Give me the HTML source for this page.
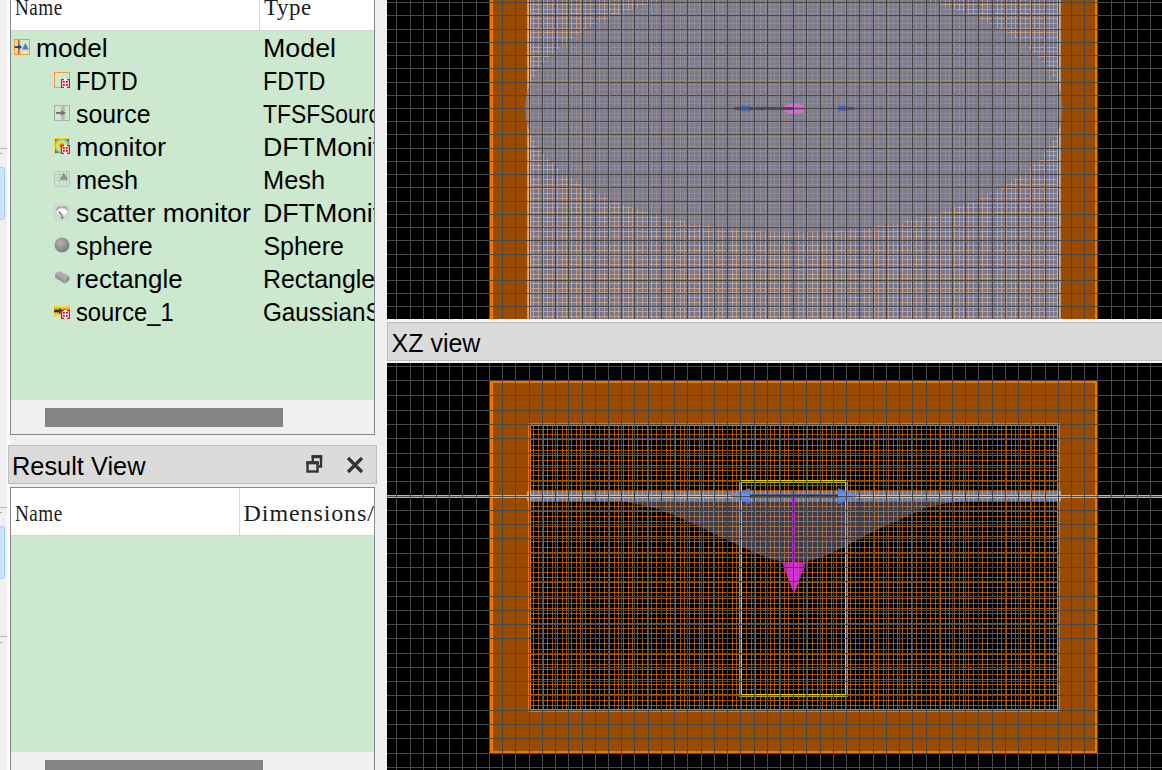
<!DOCTYPE html>
<html><head><meta charset="utf-8"><title>FDTD layout</title>
<style>
html,body{margin:0;padding:0}
body{width:1162px;height:770px;overflow:hidden;background:#f0f0f0;position:relative;font-family:"Liberation Sans",sans-serif;color:#000}
.abs{position:absolute}
.vp{position:absolute;left:387px;top:0}
.t{position:absolute;font-size:25px;line-height:29px;white-space:nowrap;transform-origin:0 50%}
.ic{position:absolute}
.mono{position:absolute;transform-origin:0 50%;color:#1c1c1c;font-family:"Liberation Serif","Noto Serif CJK SC",serif;font-size:24px;line-height:24px;white-space:nowrap;height:24px}
.mc{display:inline-block;width:12px;height:24px;vertical-align:top}
.mi{display:inline-block;transform-origin:50% 50%;text-align:center}
.frame{position:absolute;border:1px solid #828790;border-top:none;box-sizing:border-box;overflow:hidden}
/*bar*/.bar{position:absolute;background:#dbdbdb;border:1px solid #bebebe;box-sizing:border-box}
.bt{position:absolute;font-size:25px;line-height:29px;white-space:nowrap;transform-origin:0 50%}
.blue{position:absolute;left:-2px;width:7px;background:#cce4ff;border:1px solid #99ccff;border-radius:3px;box-sizing:border-box}
.hl{position:absolute;left:0;width:7px;height:1px;background:#b4b4b4}
.mk{position:absolute;left:0;width:2px;height:1px;background:#a0a0a0}
</style></head><body>
<!-- left strip -->
<div class="abs" style="left:7px;top:0;width:3px;height:770px;background:#fdfdfd"></div>
<div class="hl" style="top:148px"></div><div class="mk" style="top:153px"></div>
<div class="blue" style="top:167px;height:53px"></div>
<div class="hl" style="top:507px"></div><div class="mk" style="top:512px"></div>
<div class="blue" style="top:526px;height:53px"></div>
<div class="hl" style="top:636px"></div><div class="mk" style="top:642px"></div>

<!-- object tree -->
<div class="frame" style="left:10px;top:0;width:365px;height:435px;background:#cce8cf">
 <div class="abs" style="left:0;top:0;width:363px;height:30px;background:#fff;border-bottom:1px solid #d4d4d4"></div>
 <div class="abs" style="left:248px;top:0;width:1px;height:30px;background:#d8d8d8"></div>
 <div class="abs" style="left:0;top:400px;width:363px;height:34px;background:#f0f0f0"></div>
 <div class="abs" style="left:34px;top:408px;width:238px;height:19px;background:#858585"></div>
</div>
<div class="abs" id="treeclip" style="left:11px;top:0;width:363px;height:400px;overflow:hidden"><div class="abs" style="left:-11px;top:0;width:400px;height:400px">
<span class="mono" style="left:14.6px;top:-5.0px;transform:scaleX(0.8);letter-spacing:0.6px">Name</span>
<span class="mono" style="left:264px;top:-5.0px;transform:scaleX(0.955);letter-spacing:0.6px">Type</span>
<svg class="ic" style="left:14px;top:39px" width="16" height="16" viewBox="0 0 16 16"><rect x="2.6" y="1" width="1.6" height="14" fill="#f8d468"/><rect x="4" y="0" width="1.5" height="16" fill="#f04420"/><rect x="5.4" y="1" width="0.9" height="14" fill="#f8902c"/><rect x="0.5" y="0.5" width="15" height="15" fill="none" stroke="#f09a3c"/><rect x="0.6" y="7.1" width="6" height="1.9" fill="#04508c"/><path d="M4.6 5.7L8 8 4.6 10.4Z" fill="#04508c"/><path d="M11.4 4L14.8 10.6H8Z" fill="#5478c4"/></svg>
<span class="t nm" id="n0" style="left:36.3px;top:34.2px;transform:scaleX(1.053)">model</span>
<span class="t ty" id="t0" style="left:263.4px;top:34.2px;transform:scaleX(1.072)">Model</span>
<svg class="ic" style="left:54px;top:72px" width="16" height="16" viewBox="0 0 16 16"><rect x="0.5" y="0.5" width="15" height="15" fill="none" stroke="#f89838"/><rect x="7" y="7" width="9" height="9" fill="#fff"/><path d="M10 7.6H7.6V15.4H10M13 7.6H15.4V15.4H13" fill="none" stroke="#e8101c" stroke-width="1.3"/><rect x="9" y="9" width="1.8" height="1.8" fill="#e60012"/><rect x="12" y="9" width="1.8" height="1.8" fill="#e60012"/><rect x="9" y="12" width="1.8" height="1.8" fill="#e60012"/><rect x="12" y="12" width="1.8" height="1.8" fill="#e60012"/></svg>
<span class="t nm" id="n1" style="left:76.3px;top:67.2px;transform:scaleX(0.925)">FDTD</span>
<span class="t ty" id="t1" style="left:263.4px;top:67.2px;transform:scaleX(0.934)">FDTD</span>
<svg class="ic" style="left:54px;top:105px" width="16" height="16" viewBox="0 0 16 16"><defs><linearGradient id="sg" x1="0" x2="1" y1="0" y2="0"><stop offset="0" stop-color="#dcdcdc"/><stop offset="0.5" stop-color="#b0b0b0"/><stop offset="1" stop-color="#dcdcdc"/></linearGradient></defs><rect x="6" y="1" width="6" height="14" fill="url(#sg)"/><path d="M0.5 0.5H15.5V15.5H0.5" fill="none" stroke="#7c847c" stroke-dasharray="1 1"/><path d="M0.5 0.5V15.5" stroke="#9cac9c" fill="none"/><rect x="2" y="7" width="7" height="2" fill="#747474"/><path d="M7 5.2L12 8 7 10.8Z" fill="#747474"/></svg>
<span class="t nm" id="n2" style="left:76.3px;top:100.2px;transform:scaleX(0.994)">source</span>
<span class="t ty" id="t2" style="left:263.4px;top:100.2px;transform:scaleX(0.914)">TFSFSource</span>
<svg class="ic" style="left:54px;top:138px" width="16" height="16" viewBox="0 0 16 16"><defs><radialGradient id="mg" cx="0.48" cy="0.48" r="0.62"><stop offset="0" stop-color="#f04c10"/><stop offset="0.18" stop-color="#f47818"/><stop offset="0.32" stop-color="#d8e858"/><stop offset="0.58" stop-color="#c0e468"/><stop offset="0.75" stop-color="#78a8d8"/><stop offset="1" stop-color="#4058a8"/></radialGradient></defs><rect x="0.5" y="0.5" width="15" height="15" fill="url(#mg)" stroke="#ffd820"/><rect x="7" y="7" width="9" height="9" fill="#fff"/><path d="M10 7.6H7.6V15.4H10M13 7.6H15.4V15.4H13" fill="none" stroke="#e8101c" stroke-width="1.3"/><rect x="9" y="9" width="1.8" height="1.8" fill="#e60012"/><rect x="12" y="9" width="1.8" height="1.8" fill="#e60012"/><rect x="9" y="12" width="1.8" height="1.8" fill="#e60012"/><rect x="12" y="12" width="1.8" height="1.8" fill="#e60012"/></svg>
<span class="t nm" id="n3" style="left:76.3px;top:133.2px;transform:scaleX(1.078)">monitor</span>
<span class="t ty" id="t3" style="left:263.4px;top:133.2px;transform:scaleX(1.068)">DFTMonitor</span>
<svg class="ic" style="left:54px;top:171px" width="16" height="16" viewBox="0 0 16 16"><path d="M0.5 0.5H15.5V15.5H0.5ZM5.5 0.5V15.5M12.5 0.5V15.5M0.5 3.5H15.5M0.5 6.5H15.5M0.5 9.5H15.5" fill="none" stroke="#bcc8c0"/><path d="M9.5 9.5V15.5" stroke="#c8d4cc" fill="none"/><path d="M9.6 1.4L14.2 8.8H5.8Z" fill="#8e8e8e"/></svg>
<span class="t nm" id="n4" style="left:76.3px;top:166.2px;transform:scaleX(1.014)">mesh</span>
<span class="t ty" id="t4" style="left:263.4px;top:166.2px;transform:scaleX(1.016)">Mesh</span>
<svg class="ic" style="left:54px;top:204px" width="16" height="16" viewBox="0 0 16 16"><rect x="0" y="0" width="16" height="16" rx="1.5" fill="#d4d6d4"/><path d="M3 6.5A3 3 0 0 1 7.5 3.5M8.5 3.5A3 3 0 0 1 13 6.5" stroke="#a4a4a4" stroke-width="1.8" fill="none"/><ellipse cx="8" cy="7.8" rx="5.2" ry="3" fill="#fdfdfd"/><path d="M4.6 7.4L8.4 11.4" stroke="#767676" stroke-width="1.5"/><circle cx="8.2" cy="13.6" r="1.3" fill="#7c7c7c"/></svg>
<span class="t nm" id="n5" style="left:76.3px;top:199.2px;transform:scaleX(1.057)">scatter monitor</span>
<span class="t ty" id="t5" style="left:263.4px;top:199.2px;transform:scaleX(1.068)">DFTMonitor</span>
<svg class="ic" style="left:54px;top:237px" width="16" height="16" viewBox="0 0 16 16"><defs><radialGradient id="rg" cx="0.4" cy="0.35" r="0.7"><stop offset="0" stop-color="#b4b4b4"/><stop offset="1" stop-color="#787878"/></radialGradient></defs><circle cx="8" cy="8" r="7.5" fill="url(#rg)"/></svg>
<span class="t nm" id="n6" style="left:76.3px;top:232.2px;transform:scaleX(1.002)">sphere</span>
<span class="t ty" id="t6" style="left:263.4px;top:232.2px;transform:scaleX(1.000)">Sphere</span>
<svg class="ic" style="left:54px;top:270px" width="16" height="16" viewBox="0 0 16 16"><path d="M1.1 3.4L5.1 0.9 15.4 6 10.9 9.4Z" fill="#acacac"/><path d="M1.1 3.4L10.9 9.4V13.7L1.1 7.7Z" fill="#989898"/><path d="M10.9 9.4L15.4 6V10L10.9 13.7Z" fill="#8c8c8c"/><path d="M10.9 9.4V13.7" stroke="#b4b4b4" stroke-width="0.6"/></svg>
<span class="t nm" id="n7" style="left:76.3px;top:265.2px;transform:scaleX(1.036)">rectangle</span>
<span class="t ty" id="t7" style="left:263.4px;top:265.2px;transform:scaleX(0.997)">Rectangle</span>
<svg class="ic" style="left:54px;top:303px" width="16" height="16" viewBox="0 0 16 16"><defs><linearGradient id="s1" x1="0" x2="0" y1="0" y2="1"><stop offset="0" stop-color="#ffd800"/><stop offset="0.2" stop-color="#ffd800"/><stop offset="0.36" stop-color="#e8843c"/><stop offset="0.5" stop-color="#d8682c"/><stop offset="0.64" stop-color="#e8843c"/><stop offset="0.8" stop-color="#ffd800"/><stop offset="1" stop-color="#f0c000"/></linearGradient></defs><path d="M0 2Q8 5 16 2V13.7Q8 10 0 13.7Z" fill="url(#s1)"/><rect x="0.3" y="6.9" width="7" height="2.2" fill="#203050"/><path d="M5 5L9.5 8 5 11Z" fill="#244860"/><rect x="7" y="7" width="9" height="9" fill="#fff"/><path d="M10 7.6H7.6V15.4H10M13 7.6H15.4V15.4H13" fill="none" stroke="#e8101c" stroke-width="1.3"/><rect x="9" y="9" width="1.8" height="1.8" fill="#e60012"/><rect x="12" y="9" width="1.8" height="1.8" fill="#e60012"/><rect x="9" y="12" width="1.8" height="1.8" fill="#e60012"/><rect x="12" y="12" width="1.8" height="1.8" fill="#e60012"/></svg>
<span class="t nm" id="n8" style="left:76.3px;top:298.2px;transform:scaleX(0.949)">source_1</span>
<span class="t ty" id="t8" style="left:263.4px;top:298.2px;transform:scaleX(0.970)">GaussianSource</span>
</div></div>

<!-- result view -->
<div class="bar" style="left:8px;top:445px;width:369px;height:39px"></div>
<span class="bt" id="rv" style="left:12.2px;top:452px;transform:scaleX(1.015)">Result View</span>
<svg class="abs" style="left:305px;top:454px" width="60" height="22" viewBox="305 454 60 22"><path d="M312.8 462V456.5H321V466.5H318.5" fill="none" stroke="#333" stroke-width="2.4" stroke-linejoin="miter"/><rect x="311.6" y="455.2" width="10.6" height="3" fill="#333"/><rect x="307.5" y="462.5" width="10" height="9" fill="none" stroke="#333" stroke-width="2.4"/><rect x="306.3" y="461.3" width="12.4" height="3" fill="#333"/><path d="M348 458L362 472M362 458L348 472" stroke="#333" stroke-width="3.2" fill="none"/></svg>
<div class="frame" style="left:10px;top:487px;width:365px;height:300px;background:#cce8cf;border-top:1px solid #828790">
 <div class="abs" style="left:0;top:0;width:363px;height:47px;background:#fff;border-bottom:1px solid #d4d4d4"></div>
 <div class="abs" style="left:228px;top:0;width:1px;height:47px;background:#d8d8d8"></div>
 <div class="abs" style="left:0;top:264px;width:363px;height:40px;background:#f0f0f0"></div>
 <div class="abs" style="left:34px;top:272px;width:218px;height:19px;background:#858585"></div>
</div>
<div class="abs" style="left:11px;top:488px;width:363px;height:47px;overflow:hidden"><div class="abs" style="left:-11px;top:-488px;width:400px;height:600px">
<span class="mono" style="left:14.6px;top:500.5px;transform:scaleX(0.8);letter-spacing:0.6px">Name</span>
<span class="mono" style="left:243.6px;top:500.5px;transform:scaleX(1.0);letter-spacing:0.9px">Dimensions/</span>
</div></div>

<!-- XZ title bar -->
<div class="abs" style="left:387px;top:319px;width:775px;height:44px;background:#f4f4f4"></div>
<div class="bar" style="left:387px;top:322px;width:790px;height:39px"></div>
<span class="bt" id="xz" style="left:391.5px;top:329.2px">XZ view</span>

<svg class="vp" width="775" height="770" viewBox="387 0 775 770" shape-rendering="crispEdges">
<defs><clipPath id="ct"><rect x="387" y="0" width="775" height="319"/></clipPath><clipPath id="cb"><rect x="387" y="363" width="775" height="407"/></clipPath><linearGradient id="gb" x1="0" y1="0" x2="0" y2="1"><stop offset="0" stop-color="#3f6fe0"/><stop offset="0.5" stop-color="#6c98f4"/><stop offset="1" stop-color="#3f6fe0"/></linearGradient><linearGradient id="gm" x1="0" y1="0" x2="1" y2="0"><stop offset="0" stop-color="#bc1cc4"/><stop offset="0.5" stop-color="#e840f0"/><stop offset="1" stop-color="#bc1cc4"/></linearGradient></defs>
<g clip-path="url(#ct)">
<rect x="387" y="0" width="775" height="319" fill="#000"/>
<rect x="489" y="-5" width="609" height="330" fill="#9a4b00"/>
<rect x="489" y="-5" width="4" height="330" fill="#e87800"/><rect x="1095" y="-5" width="3" height="330" fill="#e87800"/>
<rect x="529" y="-5" width="530" height="330" fill="#000"/>
<path d="M533.5 0V319M538.5 0V319M543.5 0V319M547.5 0V319M552.5 0V319M557.5 0V319M562.5 0V319M566.5 0V319M571.5 0V319M576.5 0V319M580.5 0V319M585.5 0V319M590.5 0V319M595.5 0V319M599.5 0V319M604.5 0V319M609.5 0V319M614.5 0V319M618.5 0V319M623.5 0V319M628.5 0V319M632.5 0V319M637.5 0V319M642.5 0V319M647.5 0V319M651.5 0V319M656.5 0V319M661.5 0V319M666.5 0V319M670.5 0V319M675.5 0V319M680.5 0V319M684.5 0V319M689.5 0V319M694.5 0V319M699.5 0V319M703.5 0V319M708.5 0V319M713.5 0V319M718.5 0V319M722.5 0V319M727.5 0V319M732.5 0V319M736.5 0V319M741.5 0V319M746.5 0V319M751.5 0V319M755.5 0V319M760.5 0V319M765.5 0V319M770.5 0V319M774.5 0V319M779.5 0V319M784.5 0V319M788.5 0V319M793.5 0V319M798.5 0V319M803.5 0V319M807.5 0V319M812.5 0V319M817.5 0V319M822.5 0V319M826.5 0V319M831.5 0V319M836.5 0V319M841.5 0V319M845.5 0V319M850.5 0V319M855.5 0V319M859.5 0V319M864.5 0V319M869.5 0V319M874.5 0V319M878.5 0V319M883.5 0V319M888.5 0V319M893.5 0V319M897.5 0V319M902.5 0V319M907.5 0V319M911.5 0V319M916.5 0V319M921.5 0V319M926.5 0V319M930.5 0V319M935.5 0V319M940.5 0V319M945.5 0V319M949.5 0V319M954.5 0V319M959.5 0V319M963.5 0V319M968.5 0V319M973.5 0V319M978.5 0V319M982.5 0V319M987.5 0V319M992.5 0V319M997.5 0V319M1001.5 0V319M1006.5 0V319M1011.5 0V319M1015.5 0V319M1020.5 0V319M1025.5 0V319M1030.5 0V319M1034.5 0V319M1039.5 0V319M1044.5 0V319M1049.5 0V319M1053.5 0V319" stroke="#e87800" stroke-opacity="0.69" stroke-width="1" fill="none"/>
<path d="M529 4.5H1059M529 9.5H1059M529 13.5H1059M529 18.5H1059M529 23.5H1059M529 28.5H1059M529 32.5H1059M529 37.5H1059M529 42.5H1059M529 47.5H1059M529 51.5H1059M529 56.5H1059M529 61.5H1059M529 65.5H1059M529 70.5H1059M529 75.5H1059M529 80.5H1059M529 84.5H1059M529 89.5H1059M529 94.5H1059M529 99.5H1059M529 103.5H1059M529 108.5H1059M529 113.5H1059M529 117.5H1059M529 122.5H1059M529 127.5H1059M529 132.5H1059M529 136.5H1059M529 141.5H1059M529 146.5H1059M529 151.5H1059M529 155.5H1059M529 160.5H1059M529 165.5H1059M529 169.5H1059M529 174.5H1059M529 179.5H1059M529 184.5H1059M529 188.5H1059M529 193.5H1059M529 198.5H1059M529 203.5H1059M529 207.5H1059M529 212.5H1059M529 217.5H1059M529 221.5H1059M529 226.5H1059M529 231.5H1059M529 236.5H1059M529 240.5H1059M529 245.5H1059M529 250.5H1059M529 255.5H1059M529 259.5H1059M529 264.5H1059M529 269.5H1059M529 274.5H1059M529 278.5H1059M529 283.5H1059M529 288.5H1059M529 292.5H1059M529 297.5H1059M529 302.5H1059M529 307.5H1059M529 311.5H1059M529 316.5H1059" stroke="#e87800" stroke-opacity="0.69" stroke-width="1" fill="none"/>
<path d="M528.5 0V319M530.5 0V319M1057.5 0V319M1059.5 0V319" stroke="#e87800" stroke-width="1" fill="none"/>
<rect x="527" y="-5" width="534" height="330" fill="rgb(213,218,255)" fill-opacity="0.55"/>
<ellipse cx="793.7" cy="108.5" rx="269" ry="124" fill="rgb(125,126,143)" fill-opacity="0.64" shape-rendering="auto"/>
<ellipse cx="794.5" cy="108.5" rx="11.5" ry="5.5" fill="#cc70cc"/>
<rect x="734" y="107" width="60" height="3" fill="#2f4fa0"/>
<rect x="794" y="107" width="44" height="3" fill="#5a86d8"/>
<rect x="838" y="107" width="16" height="3" fill="#3a5aa8"/>
<path d="M741 108.5L750 105V112Z" fill="#4466b8"/><rect x="741" y="106" width="9" height="5" fill="#4466b8"/>
<path d="M847 108.5L838 105V112Z" fill="#4466b8"/><rect x="838" y="106" width="8" height="5" fill="#4466b8"/>
<path d="M396.5 0V319M410.5 0V319M423.5 0V319M436.5 0V319M449.5 0V319M462.5 0V319M476.5 0V319M489.5 0V319M502.5 0V319M515.5 0V319M529.5 0V319M542.5 0V319M555.5 0V319M568.5 0V319M582.5 0V319M595.5 0V319M608.5 0V319M621.5 0V319M634.5 0V319M648.5 0V319M661.5 0V319M674.5 0V319M687.5 0V319M701.5 0V319M714.5 0V319M727.5 0V319M740.5 0V319M754.5 0V319M767.5 0V319M780.5 0V319M793.5 0V319M806.5 0V319M820.5 0V319M833.5 0V319M846.5 0V319M859.5 0V319M873.5 0V319M886.5 0V319M899.5 0V319M912.5 0V319M926.5 0V319M939.5 0V319M952.5 0V319M965.5 0V319M978.5 0V319M992.5 0V319M1005.5 0V319M1018.5 0V319M1031.5 0V319M1045.5 0V319M1058.5 0V319M1071.5 0V319M1084.5 0V319M1097.5 0V319M1111.5 0V319M1124.5 0V319M1137.5 0V319M1150.5 0V319M387 2.5H1162M387 15.5H1162M387 29.5H1162M387 42.5H1162M387 55.5H1162M387 68.5H1162M387 82.5H1162M387 95.5H1162M387 108.5H1162M387 121.5H1162M387 134.5H1162M387 148.5H1162M387 161.5H1162M387 174.5H1162M387 187.5H1162M387 201.5H1162M387 214.5H1162M387 227.5H1162M387 240.5H1162M387 254.5H1162M387 267.5H1162M387 280.5H1162M387 293.5H1162M387 306.5H1162" stroke="#484848" stroke-width="1" fill="none"/>
</g>
<g clip-path="url(#cb)">
<rect x="387" y="363" width="775" height="407" fill="#000"/>
<rect x="489" y="380" width="609" height="374" fill="#e87800"/>
<rect x="493" y="383" width="602" height="368" fill="#9a4b00"/>
<rect x="528" y="423" width="532" height="289" fill="#e87800"/>
<rect x="529" y="424" width="530" height="287" fill="#000"/>
<path d="M533.5 424V711M538.5 424V711M543.5 424V711M547.5 424V711M552.5 424V711M557.5 424V711M562.5 424V711M566.5 424V711M571.5 424V711M576.5 424V711M580.5 424V711M585.5 424V711M590.5 424V711M595.5 424V711M599.5 424V711M604.5 424V711M609.5 424V711M614.5 424V711M618.5 424V711M623.5 424V711M628.5 424V711M632.5 424V711M637.5 424V711M642.5 424V711M647.5 424V711M651.5 424V711M656.5 424V711M661.5 424V711M666.5 424V711M670.5 424V711M675.5 424V711M680.5 424V711M684.5 424V711M689.5 424V711M694.5 424V711M699.5 424V711M703.5 424V711M708.5 424V711M713.5 424V711M718.5 424V711M722.5 424V711M727.5 424V711M732.5 424V711M736.5 424V711M741.5 424V711M746.5 424V711M751.5 424V711M755.5 424V711M760.5 424V711M765.5 424V711M770.5 424V711M774.5 424V711M779.5 424V711M784.5 424V711M788.5 424V711M793.5 424V711M798.5 424V711M803.5 424V711M807.5 424V711M812.5 424V711M817.5 424V711M822.5 424V711M826.5 424V711M831.5 424V711M836.5 424V711M841.5 424V711M845.5 424V711M850.5 424V711M855.5 424V711M859.5 424V711M864.5 424V711M869.5 424V711M874.5 424V711M878.5 424V711M883.5 424V711M888.5 424V711M893.5 424V711M897.5 424V711M902.5 424V711M907.5 424V711M911.5 424V711M916.5 424V711M921.5 424V711M926.5 424V711M930.5 424V711M935.5 424V711M940.5 424V711M945.5 424V711M949.5 424V711M954.5 424V711M959.5 424V711M963.5 424V711M968.5 424V711M973.5 424V711M978.5 424V711M982.5 424V711M987.5 424V711M992.5 424V711M997.5 424V711M1001.5 424V711M1006.5 424V711M1011.5 424V711M1015.5 424V711M1020.5 424V711M1025.5 424V711M1030.5 424V711M1034.5 424V711M1039.5 424V711M1044.5 424V711M1049.5 424V711M1053.5 424V711" stroke="#e87800" stroke-opacity="0.69" stroke-width="1" fill="none"/>
<path d="M529 429.5H1059M529 434.5H1059M529 439.5H1059M529 445.5H1059M529 450.5H1059M529 455.5H1059M529 460.5H1059M529 465.5H1059M529 470.5H1059M529 475.5H1059M529 480.5H1059M529 485.5H1059M529 490.5H1059M529 496.5H1059M529 501.5H1059M529 506.5H1059M529 511.5H1059M529 516.5H1059M529 521.5H1059M529 526.5H1059M529 531.5H1059M529 536.5H1059M529 541.5H1059M529 547.5H1059M529 552.5H1059M529 557.5H1059M529 562.5H1059M529 567.5H1059M529 572.5H1059M529 577.5H1059M529 582.5H1059M529 587.5H1059M529 592.5H1059M529 598.5H1059M529 603.5H1059M529 608.5H1059M529 613.5H1059M529 618.5H1059M529 623.5H1059M529 628.5H1059M529 633.5H1059M529 638.5H1059M529 643.5H1059M529 649.5H1059M529 654.5H1059M529 659.5H1059M529 664.5H1059M529 669.5H1059M529 674.5H1059M529 679.5H1059M529 684.5H1059M529 689.5H1059M529 694.5H1059M529 700.5H1059M529 705.5H1059" stroke="#e87800" stroke-opacity="0.69" stroke-width="1" fill="none"/>
<path d="M530.5 424V711M1057.5 424V711M529 425.5H1059M529 709.5H1059" stroke="#e87800" stroke-width="1" fill="none"/>
<rect x="739" y="480" width="109" height="1" fill="#f0d000"/><rect x="741" y="482" width="105" height="1" fill="#a8a800"/>
<rect x="739" y="480" width="1" height="217" fill="#a8a800"/><rect x="741" y="482" width="1" height="213" fill="#f0d000"/>
<rect x="845" y="482" width="1" height="213" fill="#f0d000"/><rect x="847" y="480" width="1" height="217" fill="#a8a800"/>
<rect x="741" y="694" width="105" height="1" fill="#f0d000"/><rect x="739" y="696" width="109" height="1" fill="#a8a800"/>
<rect x="387" y="495" width="775" height="3" fill="#b4b4d8"/>
<rect x="527" y="491" width="534" height="10" fill="rgb(213,218,255)" fill-opacity="0.55"/>
<rect x="527" y="495" width="534" height="3" fill="#c4c4e4"/>
<polygon points="622.0,501 640.0,505 660.0,509.5 680.0,518 700.0,527 720.0,536.5 740.0,546 760.0,555 772.0,559.5 782.0,561.5 805.4,561.5 815.4,559.5 827.4,555 847.4,545.13 867.4,534.63 887.4,525 907.4,516 927.4,507.5 947.4,503 970.4,501" fill="rgb(145,150,190)" fill-opacity="0.40" shape-rendering="auto"/>
<rect x="792" y="498" width="3" height="66" fill="#a832be"/>
<rect x="748" y="494.6" width="92" height="1.4" fill="#0030b8" shape-rendering="auto"/><rect x="748" y="496" width="92" height="2" fill="#3c5abe"/>
<path d="M729 496L750 488V504Z" fill="url(#gb)" shape-rendering="auto"/>
<path d="M858.5 496L838 488V504Z" fill="url(#gb)" shape-rendering="auto"/>
<path d="M782 562.5H806L794 594Z" fill="url(#gm)" fill-opacity="0.9" shape-rendering="auto"/>
<path d="M396.5 363V770M410.5 363V770M423.5 363V770M436.5 363V770M449.5 363V770M462.5 363V770M476.5 363V770M489.5 363V770M502.5 363V770M515.5 363V770M529.5 363V770M542.5 363V770M555.5 363V770M568.5 363V770M582.5 363V770M595.5 363V770M608.5 363V770M621.5 363V770M634.5 363V770M648.5 363V770M661.5 363V770M674.5 363V770M687.5 363V770M701.5 363V770M714.5 363V770M727.5 363V770M740.5 363V770M754.5 363V770M767.5 363V770M780.5 363V770M793.5 363V770M806.5 363V770M820.5 363V770M833.5 363V770M846.5 363V770M859.5 363V770M873.5 363V770M886.5 363V770M899.5 363V770M912.5 363V770M926.5 363V770M939.5 363V770M952.5 363V770M965.5 363V770M978.5 363V770M992.5 363V770M1005.5 363V770M1018.5 363V770M1031.5 363V770M1045.5 363V770M1058.5 363V770M1071.5 363V770M1084.5 363V770M1097.5 363V770M1111.5 363V770M1124.5 363V770M1137.5 363V770M1150.5 363V770M387 366.5H1162M387 380.5H1162M387 395.5H1162M387 410.5H1162M387 424.5H1162M387 438.5H1162M387 453.5H1162M387 467.5H1162M387 481.5H1162M387 496.5H1162M387 510.5H1162M387 524.5H1162M387 538.5H1162M387 553.5H1162M387 567.5H1162M387 581.5H1162M387 596.5H1162M387 610.5H1162M387 624.5H1162M387 638.5H1162M387 653.5H1162M387 667.5H1162M387 681.5H1162M387 695.5H1162M387 710.5H1162M387 724.5H1162M387 738.5H1162M387 753.5H1162M387 767.5H1162" stroke="#484848" stroke-width="1" fill="none"/>
</g>
</svg>
</body></html>
